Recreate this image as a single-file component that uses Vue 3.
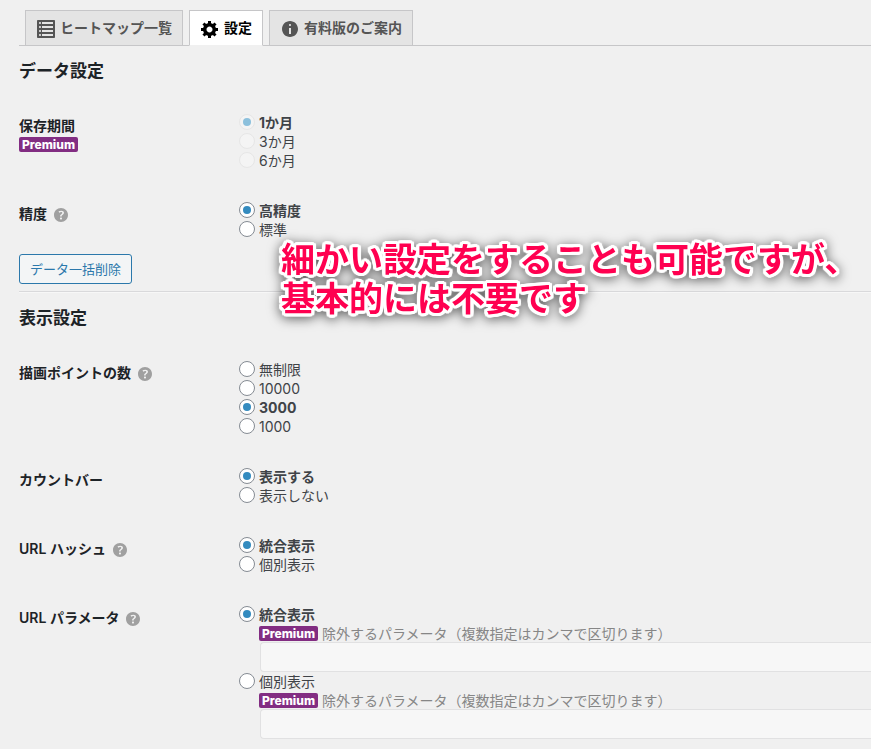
<script setup>
import { reactive } from 'vue'

const icons = {
  list: 'M2 19h16c.55 0 1-.45 1-1V2c0-.55-.45-1-1-1H2c-.55 0-1 .45-1 1v16c0 .55.45 1 1 1zM4 3c.55 0 1 .45 1 1s-.45 1-1 1-1-.45-1-1 .45-1 1-1zm13 0v2H6V3h11zM4 7c.55 0 1 .45 1 1s-.45 1-1 1-1-.45-1-1 .45-1 1-1zm13 0v2H6V7h11zM4 11c.55 0 1 .45 1 1s-.45 1-1 1-1-.45-1-1 .45-1 1-1zm13 0v2H6v-2h11zM4 15c.55 0 1 .45 1 1s-.45 1-1 1-1-.45-1-1 .45-1 1-1zm13 0v2H6v-2h11z',
  gear: 'M18 12h-2.18c-.17.7-.44 1.35-.81 1.93l1.54 1.54-2.1 2.1-1.54-1.54c-.58.36-1.23.63-1.91.79V19H8v-2.18c-.68-.16-1.33-.43-1.91-.79l-1.54 1.54-2.12-2.12 1.54-1.54c-.36-.58-.63-1.23-.79-1.91H1V9.03h2.17c.16-.7.44-1.35.8-1.94L2.43 5.55l2.1-2.1 1.54 1.54c.58-.37 1.24-.64 1.93-.81V2h3v2.18c.68.16 1.33.43 1.91.79l1.54-1.54 2.12 2.12-1.54 1.54c.36.59.64 1.24.8 1.94H18V12zm-8.5 1.5c1.66 0 3-1.34 3-3s-1.34-3-3-3-3 1.34-3 3 1.34 3 3 3z',
  info: 'M10 2c4.42 0 8 3.58 8 8s-3.58 8-8 8-8-3.58-8-8 3.58-8 8-8zm1 4c0-.55-.45-1-1-1s-1 .45-1 1 .45 1 1 1 1-.45 1-1zm0 9V9H9v6h2z',
  help: 'M17 10c0-3.87-3.14-7-7-7-3.87 0-7 3.13-7 7s3.13 7 7 7c3.86 0 7-3.13 7-7zm-6.3 1.48H9.14v-.43c0-.38.08-.7.24-.98s.46-.57.88-.89c.41-.29.68-.53.81-.71.14-.18.2-.39.2-.62 0-.25-.09-.44-.28-.58-.19-.13-.45-.19-.79-.19-.58 0-1.25.19-2 .57l-.64-1.28c.87-.49 1.8-.74 2.77-.74.81 0 1.45.2 1.92.58.48.39.71.91.71 1.55 0 .43-.09.8-.29 1.11-.19.32-.57.67-1.11 1.06-.38.28-.61.49-.71.63-.1.15-.15.34-.15.57v.35zm-1.47 2.74c-.18-.17-.27-.42-.27-.73 0-.33.08-.58.26-.75s.43-.25.77-.25c.32 0 .57.09.75.26s.27.42.27.74c0 .3-.09.55-.27.72-.18.18-.43.27-.75.27-.33 0-.58-.09-.76-.26z',
}

const tabs = [
  { label: 'ヒートマップ一覧', icon: 'list' },
  { label: '設定', icon: 'gear', active: true },
  { label: '有料版のご案内', icon: 'info' },
]

const dataRows = [
  { key: 'period', label: '保存期間', premium: true, disabled: true, options: ['1か月', '3か月', '6か月'] },
  { key: 'accuracy', label: '精度', help: true, options: ['高精度', '標準'] },
]

const displayRows = [
  { key: 'points', label: '描画ポイントの数', help: true, options: ['無制限', '10000', '3000', '1000'] },
  { key: 'countbar', label: 'カウントバー', options: ['表示する', '表示しない'] },
  { key: 'hash', label: 'URL ハッシュ', help: true, options: ['統合表示', '個別表示'] },
  { key: 'param', label: 'URL パラメータ', help: true, exclude: true, options: ['統合表示', '個別表示'] },
]

const sections = [
  { title: 'データ設定', rows: dataRows, button: 'データ一括削除' },
  { title: '表示設定', rows: displayRows },
]

const chosen = reactive({
  period: '1か月',
  accuracy: '高精度',
  points: '3000',
  countbar: '表示する',
  hash: '統合表示',
  param: '統合表示',
})
</script>

<template>
  <main class="page">
    <nav class="tabs">
      <a v-for="tab in tabs" :key="tab.label" href="#" class="tab" :class="{ active: tab.active }">
        <svg class="icon" viewBox="0 0 20 20" aria-hidden="true"><path :d="icons[tab.icon]" /></svg>
        <span>{{ tab.label }}</span>
      </a>
    </nav>

    <form @submit.prevent>
      <section v-for="section in sections" :key="section.title" class="section">
        <h2 class="title">{{ section.title }}</h2>
        <div class="rows">
          <div v-for="row in section.rows" :key="row.key" class="row" role="radiogroup" :aria-labelledby="row.key + '-label'">
            <div class="head">
              <div class="name">
                <span :id="row.key + '-label'">{{ row.label }}</span>
                <svg v-if="row.help" class="icon help" viewBox="0 0 20 20" aria-hidden="true"><path :d="icons.help" /></svg>
              </div>
              <span v-if="row.premium" class="badge">Premium</span>
            </div>
            <ul class="options">
              <li v-for="(option, i) in row.options" :key="option">
                <label class="option" :class="{ selected: chosen[row.key] === option }">
                  <input v-model="chosen[row.key]" class="radio" type="radio" :name="row.key" :value="option" :disabled="row.disabled" />
                  <span>{{ option }}</span>
                </label>
                <div v-if="row.exclude" class="exclude">
                  <label class="note" :for="'exclude-' + i">
                    <span class="badge">Premium</span>
                    <span class="muted">除外するパラメータ（複数指定はカンマで区切ります）</span>
                  </label>
                  <input :id="'exclude-' + i" class="text" type="text" disabled />
                </div>
              </li>
            </ul>
          </div>
        </div>
        <button v-if="section.button" type="button" class="button">{{ section.button }}</button>
      </section>
    </form>

    <p class="callout">細かい設定をすることも可能ですが、<br />基本的には不要です</p>
  </main>
</template>

<style>
body {
  background: #f0f0f0;
}
</style>

<style scoped>
.page {
  position: relative;
  overflow: hidden;
  padding: 10px 0 10px 19px;
  color: #3f4347;
  font: 14px/19px Inter, "Noto Sans CJK JP", sans-serif;
}

.tabs {
  display: flex;
  gap: 6px;
  padding-left: 6px;
  border-bottom: 1px solid #c6c6c8;
}

.tab {
  display: flex;
  align-items: center;
  gap: 4px;
  box-sizing: border-box;
  height: 36px;
  padding: 0 10px 2px;
  margin-bottom: -1px;
  border: 1px solid #c6c6c8;
  background: #e4e4e4;
  color: #555;
  font-weight: 600;
  text-decoration: none;
  white-space: nowrap;
}

.tab.active {
  border-bottom-color: #f0f0f0;
  background: #fff;
  color: #000;
}

.icon {
  flex: none;
  width: 20px;
  height: 20px;
  fill: currentColor;
}

.tab .icon {
  margin-top: 4px;
}

.section {
  padding-top: 13px;
}

.section + .section {
  margin-top: 7px;
  padding-top: 14px;
  border-top: 1px solid #d9d9db;
  box-shadow: inset 0 1px #f7f7f7;
}

.title {
  margin: 0 0 30px;
  color: #1d2327;
  font-size: 17px;
  line-height: 24px;
  font-weight: 600;
}

.rows {
  display: grid;
  gap: 31px;
}

.row {
  display: grid;
  grid-template-columns: 220px minmax(0, 1fr);
  align-items: start;
}

.head {
  display: grid;
  justify-items: start;
  gap: 2px;
  height: 38px;
  align-content: start;
  padding-top: 3px;
  box-sizing: border-box;
}

.name {
  display: flex;
  align-items: center;
  gap: 4px;
  height: 19px;
  color: #1d2327;
  font-weight: 600;
}

.help {
  margin-top: 2px;
  color: #a0a0a0;
}

.badge {
  padding: 0 3px;
  border-radius: 2px;
  background: #822d82;
  color: #fff;
  font-size: 12px;
  line-height: 15px;
  font-weight: 800;
}

.options {
  margin: 0;
  padding: 0;
  list-style: none;
}

.option {
  display: flex;
  gap: 4px;
  width: fit-content;
  height: 19px;
}

.selected {
  font-weight: 700;
}

.radio {
  appearance: none;
  display: grid;
  place-content: center;
  box-sizing: border-box;
  width: 16px;
  height: 16px;
  margin: 1px 0 0;
  border: 1px solid #858b93;
  border-radius: 50%;
  background: #fff;
}

.radio:checked::before {
  content: "";
  width: 8px;
  height: 8px;
  border-radius: 50%;
  background: #348bbf;
}

.radio:disabled {
  border-color: #e6e6e6;
  background: #f4f4f4;
}

.radio:disabled:checked::before {
  background: #8cc0dc;
}

.exclude {
  padding-left: 20px;
}

.note {
  display: flex;
  align-items: center;
  gap: 4px;
  height: 18px;
}

.muted {
  color: #868686;
  white-space: nowrap;
}

.text {
  display: block;
  box-sizing: border-box;
  width: calc(100% - 1px);
  height: 30px;
  margin: 0 0 0 1px;
  padding: 0 8px;
  border: 1px solid #e1e1e2;
  border-right: 0;
  border-radius: 4px 0 0 4px;
  background: #f7f7f7;
  font: inherit;
}

.button {
  display: block;
  height: 30px;
  margin-top: 15px;
  padding: 0 10px;
  border: 1px solid #2b78ab;
  border-radius: 3px;
  background: #f3f5f6;
  color: #2b78ab;
  font: 13px/28px Inter, "Noto Sans CJK JP", sans-serif;
}

/* White rounded outline built from a ring of hard shadows, with a soft shadow behind it */
.callout {
  position: absolute;
  top: 240px;
  left: 281px;
  margin: 0;
  color: #ff0050;
  font-size: 34px;
  line-height: 39px;
  font-weight: 700;
  white-space: nowrap;
  text-shadow:
    3px 0 #fff, -3px 0 #fff, 0 3px #fff, 0 -3px #fff,
    3px 1px #fff, -3px 1px #fff, 3px -1px #fff, -3px -1px #fff,
    1px 3px #fff, -1px 3px #fff, 1px -3px #fff, -1px -3px #fff,
    2px 2px 1px #fff, -2px 2px 1px #fff, 2px -2px 1px #fff, -2px -2px 1px #fff,
    3px 2px 1px #fff, -3px 2px 1px #fff, 3px -2px 1px #fff, -3px -2px 1px #fff;
  filter: drop-shadow(0 2px 6px rgba(0, 0, 0, 0.6));
}
</style>
